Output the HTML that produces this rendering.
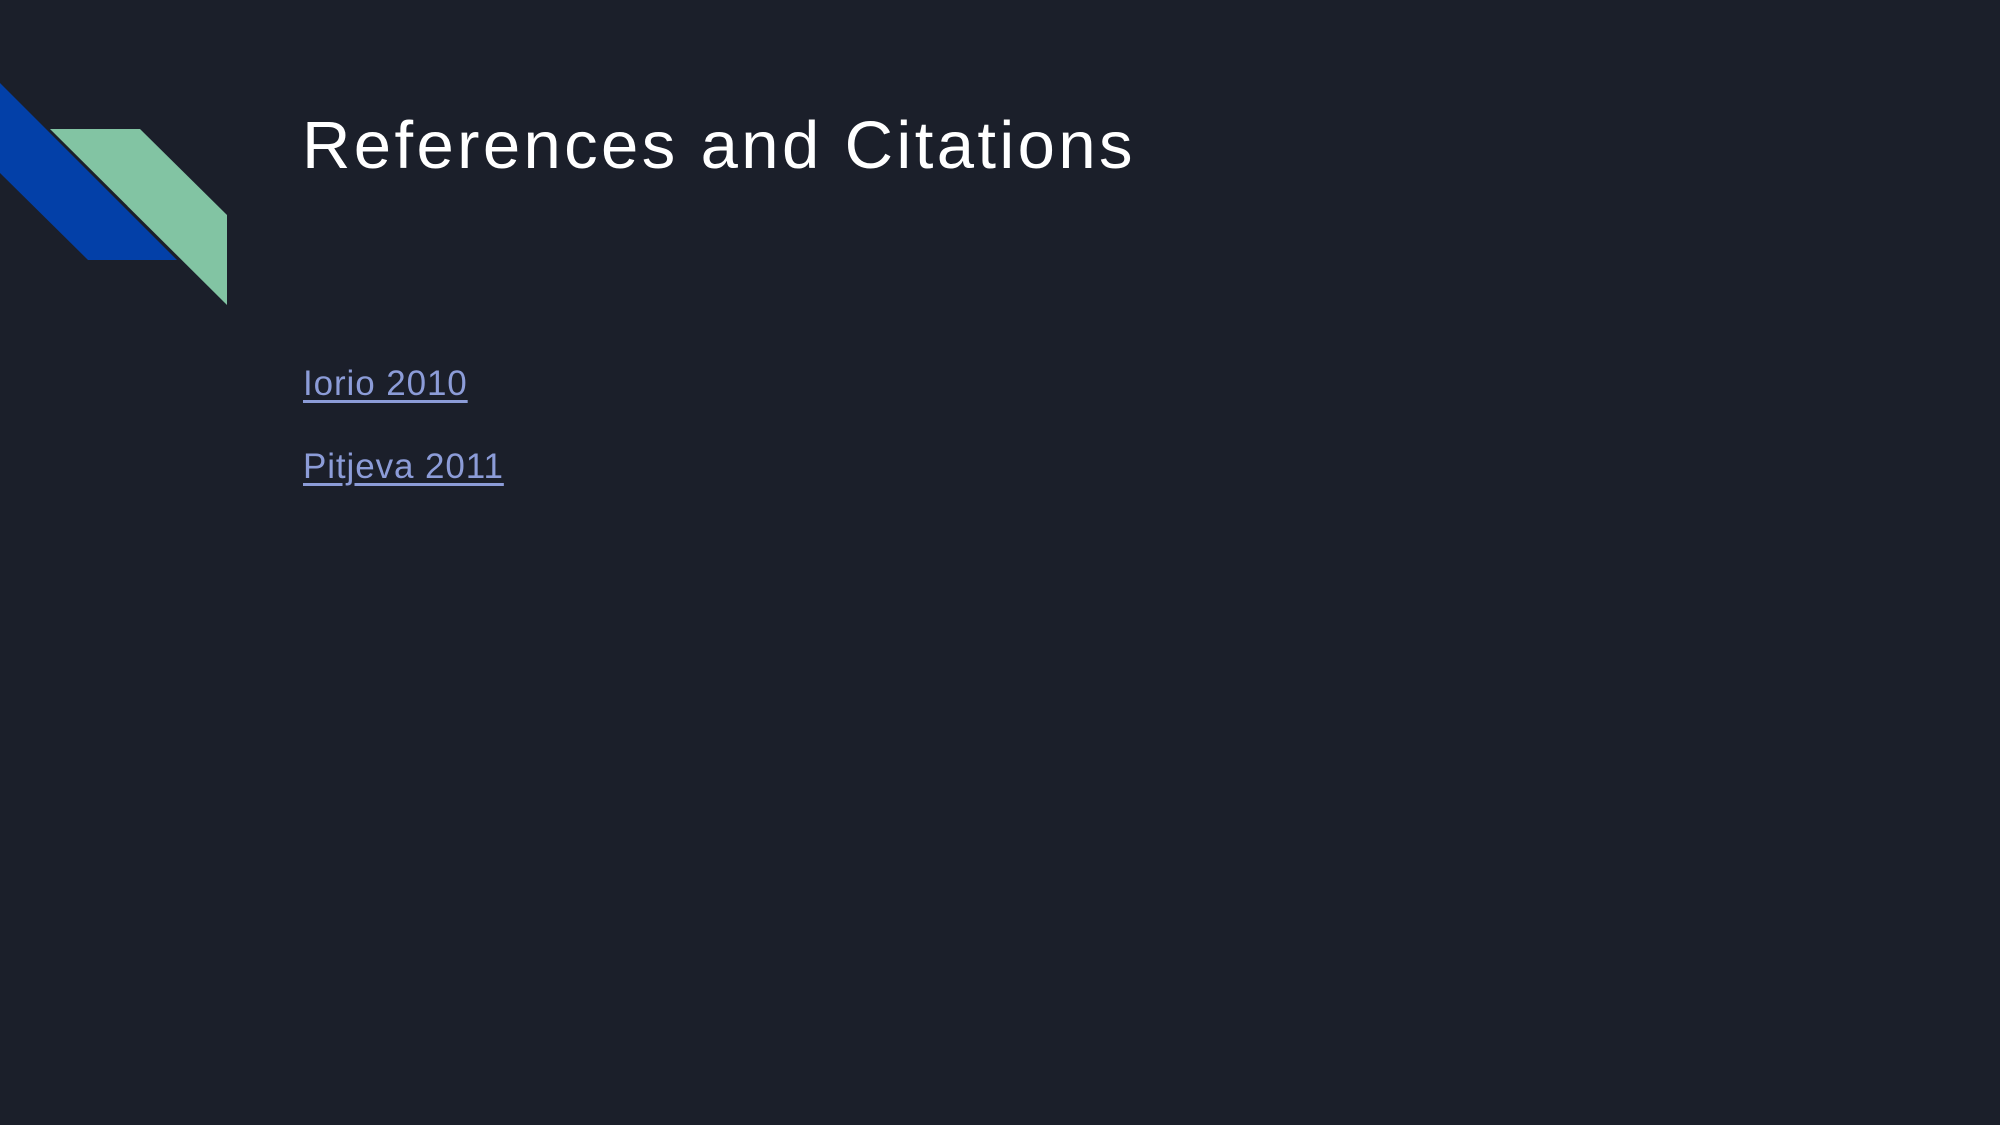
<!DOCTYPE html>
<html><head><meta charset="utf-8"><style>
html,body{margin:0;padding:0;width:2000px;height:1125px;background:#1b1f2a;overflow:hidden;position:relative;font-family:"Liberation Sans",sans-serif}
.t{position:absolute;left:302px;top:112px;font-size:67px;letter-spacing:3.4px;color:#fff;white-space:nowrap;line-height:1}
.l{position:absolute;left:303px;font-size:35px;letter-spacing:0.9px;color:#8c9cd8;text-decoration:underline;text-decoration-thickness:3px;text-underline-offset:5px;line-height:1;white-space:nowrap}
</style></head><body>
<svg width="2000" height="1125" style="position:absolute;left:0;top:0">
<polygon points="0,83 177,260 88,260 0,173" fill="#0340a8"/>
<polygon points="50,129 140,129 227,215 227,305" fill="#82c4a3"/>
</svg>
<div class="t">References and Citations</div>
<div class="l" style="top:366px">Iorio 2010</div>
<div class="l" style="top:449px">Pitjeva 2011</div>
</body></html>
